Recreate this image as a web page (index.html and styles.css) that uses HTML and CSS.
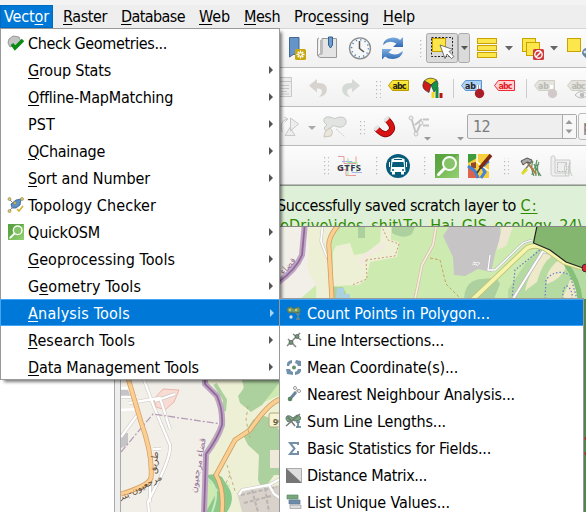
FILE: index.html
```html
<!DOCTYPE html>
<html lang="en">
<head>
<meta charset="utf-8">
<title>QGIS</title>
<link rel="stylesheet" href="styles.css">
</head>
<body>
<svg class="defs" width="0" height="0">
  <defs>
    <pattern id="grip" width="4" height="4" patternUnits="userSpaceOnUse"><rect width="1.3" height="1.3" fill="#bdbdbd"/></pattern>
    <linearGradient id="blue" x1="0" y1="0" x2="0" y2="1"><stop offset="0" stop-color="#7eafe0"/><stop offset="1" stop-color="#2f69b3"/></linearGradient>
    <linearGradient id="yel" x1="0" y1="0" x2="0" y2="1"><stop offset="0" stop-color="#fff04a"/><stop offset="1" stop-color="#e8c800"/></linearGradient>
    <linearGradient id="grn" x1="0" y1="0" x2="1" y2="1"><stop offset="0" stop-color="#5da943"/><stop offset="1" stop-color="#93cf70"/></linearGradient>
    <symbol id="osm" viewBox="0 0 24 24"><rect width="24" height="24" fill="url(#grn)"/><path d="M0 0H24L0 22Z" fill="#4d9838" opacity=".45"/><circle cx="14.5" cy="9.5" r="6.5" fill="#86c469" stroke="#fff" stroke-width="2"/><path d="M9.5 14.5L3.5 20.5" stroke="#fff" stroke-width="3" stroke-linecap="round"/></symbol>
  </defs>
</svg>
<div class="app">
  <nav class="menubar">
    <span class="top open"><span data-w="45">Vect<u>o</u>r</span></span>
    <span class="top"><span data-w="44"><u>R</u>aster</span></span>
    <span class="top"><span data-w="64"><u>D</u>atabase</span></span>
    <span class="top"><span data-w="31"><u>W</u>eb</span></span>
    <span class="top"><span data-w="36"><u>M</u>esh</span></span>
    <span class="top"><span data-w="75">Pro<u>c</u>essing</span></span>
    <span class="top"><span data-w="32"><u>H</u>elp</span></span>
  </nav>

  <div class="toolbar">
    <svg width="32" height="38" viewBox="280 29 32 38"><path d="M289.500 37.500H299V58L294 54L289.500 57Z" fill="#6594c8" stroke="#41678f"/><rect x="295" y="49" width="11" height="11" rx="1.500" fill="#c8a60c"/><path d="M300.500 50.500v8M296.500 54.500h8M297.700 51.700l5.600 5.600M303.300 51.700l-5.600 5.600" stroke="#fff" stroke-width="1.300"/><circle cx="300.500" cy="54.500" r="1.200" fill="#c8a60c"/></svg>
    <svg width="31" height="38" viewBox="312 29 31 38"><path d="M319 38Q317 38 317.500 41V55Q318 57.500 321 57.500H336.500V38.500H322V54Q319 53 318 56" fill="#e4e4e4" stroke="#999"/><path d="M321 40v14" stroke="#bbb" stroke-width="2"/><path d="M328.500 37V45L330.500 48L332.500 45V37Z" fill="#6c9bd0" stroke="#34608e"/></svg>
    <svg width="32" height="38" viewBox="343 29 32 38"><circle cx="360" cy="48.300" r="10.500" fill="#f7f7f7" stroke="#8c8c8c" stroke-width="1.300"/><circle cx="360" cy="48.300" r="8.500" fill="none" stroke="#4d85bd" stroke-width="1.600" stroke-dasharray="1.200 3.250"/><path d="M359.500 41V48.500L364 52" fill="none" stroke="#555" stroke-width="1.500"/></svg>
    <svg width="36" height="38" viewBox="375 29 36 38"><path d="M383 45Q384 38 393 37.500Q398 37.500 400 40L403 37V47H393L396.500 43.500Q389 39.500 383 45Z" fill="url(#blue)"/><path d="M403 51Q402 58 393 59Q388 59 385 56.500L382 59.500V49H392L388.500 52.500Q396 57 403 51Z" fill="url(#blue)"/></svg>
    <svg width="15" height="38" viewBox="411 29 15 38"><path d="M418 40h5v17h-5z" fill="url(#grip)"/></svg>
    <svg width="46" height="38" viewBox="426 29 46 38"><rect x="426.500" y="33.500" width="31" height="29" rx="2" fill="#dadada" stroke="#aaa"/><rect x="458.500" y="33.500" width="11" height="29" rx="2" fill="#dadada" stroke="#aaa"/><rect x="432.500" y="38.500" width="13" height="13" fill="#fbe64b" stroke="#c49c00"/><rect x="431.500" y="37.500" width="21" height="19" fill="none" stroke="#222" stroke-dasharray="2 1.500"/><path d="M440 45L453 49.500L449 51.500L454 56.500L451.500 58.500L447 54L445 58.500Z" fill="#fff" stroke="#555" stroke-width=".8"/><path d="M461 46h7l-3.500 4z" fill="#555"/></svg>
    <svg width="45" height="38" viewBox="472 29 45 38"><g fill="#fbe64b" stroke="#c9a400"><rect x="477.500" y="38.500" width="19" height="5"/><rect x="477.500" y="45.500" width="19" height="5"/><rect x="477.500" y="52.500" width="19" height="5"/></g><path d="M505 46h8l-4 4.500z" fill="#666"/></svg>
    <svg width="45" height="38" viewBox="517 29 45 38"><g fill="#fbe64b" stroke="#c9a400"><rect x="522.500" y="38.500" width="13" height="13"/><rect x="526.500" y="42.500" width="13" height="13"/></g><rect x="533" y="49" width="11" height="11" rx="1.500" fill="#d03939"/><circle cx="538.500" cy="54.500" r="3.700" fill="none" stroke="#fff" stroke-width="1.400"/><path d="M536 57l5-5" stroke="#fff" stroke-width="1.400"/><path d="M550 46h8l-4 4.500z" fill="#666"/></svg>
    <svg width="24" height="38" viewBox="562 29 24 38"><rect x="567.500" y="38.500" width="13" height="13" fill="#fbe64b" stroke="#c9a400"/><path d="M587 48a5 5 0 0 0-5 5q0 2 5 6z" fill="#66839e"/><path d="M583.500 52h3M585 50.500v3" stroke="#fff"/></svg>
  </div>

  <div class="toolbar">
    <svg width="22" height="39" viewBox="280 67 22 39"><g fill="#ededed" stroke="#c8c8c8"><path d="M274.500 76.500h17v4h-17zM278.500 80.500h13v15h-13z"/><path d="M281 84.500h8M281 87.500h8M281 90.500h6M281 93h8"/></g></svg>
    <svg width="33" height="39" viewBox="302 67 33 39"><path d="M309 84.500L317 78V82Q327 81 327 89Q326 95 319 96Q323 92 321.500 89Q320 87 317 87.500V91.500Z" fill="#d9d3d0"/></svg>
    <svg width="34" height="39" viewBox="335 67 34 39"><path d="M360 84.500L352 78V82Q342 81 342 89Q343 95 350 96Q346 92 347.500 89Q349 87 352 87.500V91.500Z" fill="#d6dad6"/></svg>
    <svg width="15" height="39" viewBox="369 67 15 39"><path d="M376 80h5v17h-5z" fill="url(#grip)"/></svg>
    <svg width="34" height="39" viewBox="384 67 34 39"><path d="M388.500 84.500L392.500 79.500H408.500V89.500H392.500Z" fill="url(#yel)" stroke="#b89c00"/><text class="tag" x="392.500" y="88" textLength="14">abc</text></svg>
    <svg width="42" height="39" viewBox="418 67 42 39"><path d="M431 84L424.500 79.500Q430 75 436.500 79Z" fill="#eed820" stroke="#222" stroke-width=".6"/><path d="M431 84L437 79.500Q440 85 434 91Z" fill="#119447" stroke="#222" stroke-width=".6"/><path d="M431 84L424 80Q420 88 429 91.500Z" fill="#cf1a1a" stroke="#222" stroke-width=".6"/><path d="M431.500 91h3v6h-3z" fill="#f6d51d"/><path d="M435.500 86h3v11h-3z" fill="#158c40"/><path d="M439.500 92h3v5h-3z" fill="#b51717"/><path d="M453.500 78v19" stroke="#ccc"/></svg>
    <svg width="31" height="39" viewBox="460 67 31 39"><path d="M461.500 84.500L465.500 79.500H481.500V89.500H465.500Z" fill="#acd2fa" stroke="#5c94d2"/><text class="tag" x="465" y="88" textLength="11">ab</text><path d="M478.500 84v6" stroke="#fff" stroke-width="3"/><path d="M478.500 84v6" stroke="#999" stroke-width="1"/><circle cx="479.500" cy="92.500" r="4.700" fill="#a91e28"/></svg>
    <svg width="41" height="39" viewBox="491 67 41 39"><path d="M494.500 84.500L498.500 79.500H514.500V89.500H498.500Z" fill="#ffd4d4" stroke="#f02930"/><text class="tag red" x="498.500" y="88" textLength="14">abc</text><path d="M526.500 78v19" stroke="#ccc"/></svg>
    <svg width="31" height="39" viewBox="532 67 31 39"><path d="M534.500 84.500L538.500 79.500H554.500V89.500H538.500Z" fill="#e5e4df" stroke="#cfcdc5"/><text class="tag dim" x="538" y="88" textLength="11">ab</text><path d="M551.500 84v6" stroke="#fff" stroke-width="3"/><circle cx="552.500" cy="92.500" r="4.700" fill="#d2caca"/></svg>
    <svg width="23" height="39" viewBox="563 67 23 39"><path d="M567.500 84.500L571.500 79.500H588V89.500H571.500Z" fill="#e5e4df" stroke="#cfcdc5"/><text class="tag dim" x="571.500" y="88" textLength="14">abc</text><path d="M575 94Q581 87 588 94Q581 100 575 94Z" fill="#f5f5f5" stroke="#bbb"/><circle cx="582" cy="94" r="2.300" fill="#bbb"/></svg>
  </div>

  <div class="toolbar">
    <svg width="40" height="39" viewBox="280 106 40 39"><g fill="#eee" stroke="#c8c8c8"><path d="M290.500 117v13l8-7zM285 134.500h10l-5-8z"/><path d="M282 131Q279 120 287 118M284 116l4 2l-3 3" fill="none"/></g><path d="M308 125h8l-4 4z" fill="#aaa"/></svg>
    <svg width="32" height="39" viewBox="320 106 32 39"><path d="M324 121Q323 115 330 116Q334 119 340 116Q347 116 346 122Q344 127 338 126Q332 123 331 127L326 130Q322 127 327 124Z" fill="#e1e4e1" stroke="#c4c8c4"/><path d="M324 136Q324 130 330 127Q334 130 331 135Z" fill="#ebe6dc" stroke="#ccc5b8"/><path d="M336 128l9 8" stroke="#ccc" stroke-dasharray="2 1"/></svg>
    <svg width="16" height="39" viewBox="352 106 16 39"><path d="M360 118h5v17h-5z" fill="url(#grip)"/></svg>
    <svg width="35" height="39" viewBox="368 106 35 39"><path d="M376.500 127.500Q385 137 390.500 130.500Q395 126 386.500 118" fill="none" stroke="#7d0505" stroke-width="6"/><path d="M376.500 127.500Q385 137 390.500 130.500Q395 126 386.500 118" fill="none" stroke="#d91212" stroke-width="4.600"/><path d="M374.500 129l4-4M384.500 120l4-4" stroke="#e5e5e5" stroke-width="3.500"/></svg>
    <svg width="64" height="39" viewBox="403 106 64 39"><g fill="none" stroke="#c5c5c5" stroke-width="2"><path d="M411 116l5 17l5-11M415 124l7-6"/><path d="M423 118.500h6M423 124.500h6"/></g><g fill="#eee" stroke="#c5c5c5"><circle cx="411" cy="117" r="2"/><circle cx="416" cy="133" r="2"/><circle cx="421" cy="122" r="2"/></g><path d="M424 136h7l-3.500 3.500zM457 136h7l-3.500 3.500z" fill="#999"/></svg>
    <div class="spin"><span data-w="17">12</span><div class="arrows"><svg width="12" height="23" viewBox="0 0 12 23"><path d="M2.500 9h7l-3.500-4zM2.500 14.500h7l-3.500 4z" fill="#999"/></svg></div></div>
    <div class="combo">p</div>
  </div>

  <div class="toolbar">
    <svg width="54" height="38" viewBox="280 145 54 38"><path d="M324 156h5v18h-5z" fill="url(#grip)"/></svg>
    <svg width="34" height="38" viewBox="334 145 34 38"><path d="M338 155.500h6v7h12v-7" fill="none" stroke="#ef9a9a"/><path d="M338 168.500h8v6h10" fill="none" stroke="#f39595"/><path d="M342 160.500h10v11h10" fill="none" stroke="#a6b0ee"/><path d="M348 157v18M348 161.500h9v11" fill="none" stroke="#9ae39a"/><text class="gtfs" x="337" y="169.500" textLength="24">GTFS</text></svg>
    <svg width="14" height="38" viewBox="368 145 14 38"><path d="M374 156h5v18h-5z" fill="url(#grip)"/></svg>
    <svg width="34" height="38" viewBox="382 145 34 38"><circle cx="398" cy="165" r="12" fill="#075d79"/><path d="M391.500 158Q398 155 404.500 158L405.500 171H390.500Z" fill="#fff"/><path d="M392.500 161h11l.7 5h-12.400z" fill="#075d79"/><path d="M394 158.500h8" stroke="#075d79"/><path d="M392 171h3v2.500h-3zM401 171h3v2.500h-3z" fill="#fff"/><path d="M389.500 161v5M406.500 161v5" stroke="#fff"/><circle cx="393" cy="169" r="1" fill="#075d79"/><circle cx="403" cy="169" r="1" fill="#075d79"/></svg>
    <svg width="15" height="38" viewBox="416 145 15 38"><path d="M423 156h5v18h-5z" fill="url(#grip)"/></svg>
    <svg width="33" height="38" viewBox="431 145 33 38"><use href="#osm" x="435" y="153" width="24" height="24"/></svg>
    <svg width="34" height="38" viewBox="464 145 34 38"><rect x="468" y="153" width="21" height="24" fill="#f9cf3d"/><path d="M468 153h9v4l-9 5z" fill="#3f9c3b"/><path d="M468 167h6l6 10h-12z" fill="#de634c"/><path d="M471 162l5-1v6l-5 1z" fill="#8e4a2b"/><path d="M468 165l7 5l3 7M489 160q-9 5-4 11l-4 6" fill="none" stroke="#4285d8" stroke-width="3"/><path d="M477 153v8l12 9" fill="none" stroke="#fff" stroke-width="1.500"/><path d="M491 154L480 167" stroke="#7b2c12" stroke-width="3.500"/><path d="M481 166l-4 6" stroke="#333" stroke-width="1.500"/></svg>
    <svg width="17" height="38" viewBox="498 145 17 38"><path d="M504 157h5v17h-5z" fill="url(#grip)"/></svg>
    <svg width="31" height="38" viewBox="515 145 31 38"><path d="M534 175q-4-9-1-15M536 175q-1-10 1-16M539 175q-3-9 0-14M541 175q-5-7-7-12M532 174q1-8 7-11" fill="none" stroke="#5a9060" stroke-width="1.200"/><path d="M527 161L536 173" stroke="#b57a35" stroke-width="2"/><path d="M521 160l6-3l5 2l-1 3l-4-1l-4 3z" fill="#aaa" stroke="#333" stroke-width=".8"/><path d="M532 160L523 171" stroke="#777" stroke-width="1.500"/><path d="M527 168L522 173" stroke="#dedb2b" stroke-width="3"/></svg>
    <svg width="40" height="38" viewBox="546 145 40 38"><path d="M551 156q3-3 4 0v16h15V159h-15M551 156v17q1 3 4 2h14" fill="#eee" stroke="#ccc"/><rect x="557.500" y="161.500" width="9" height="9" fill="none" stroke="#bbb" stroke-dasharray="2 1"/><path d="M566 175q-3-8 0-13M569 175q-2-8 1-14M572 175q-4-8-2-13" fill="none" stroke="#c5cac5"/></svg>
  </div>

  <main class="body">
    <aside class="panel"></aside>
    <div class="splitter"></div>
    <section class="view">
      <div class="message">
        <div><span data-w="239">Successfully saved scratch layer to</span> <a data-w="17">C:</a></div>
        <div class="second"><a data-w="303">eDrive\idos_shit\Tel_Hai_GIS_ecology_24\</a></div>
      </div>
      <svg class="map" width="465" height="285" viewBox="121 227 465 285">
        <rect x="121" y="227" width="465" height="285" fill="#cdebb0"/>
        <path d="M121 227H306L301 260L240 345L205 380L222 402L220 425L205 450L204 512H121Z" fill="#f2efe9"/>
        <path d="M306 227H325L330 299L317 299L316 285L285 299L280 280L301 258Z" fill="#eef0d5"/>
        <path d="M306 227Q311 245 307 265L310 275L316 285L300 299H280V281L301 258Z" fill="#f2efe9"/>
        <path d="M204 380H245L240 400L258 405L280 395V512H225L230 485L205 475L208 450L225 423Z" fill="#eef0d5"/>
        <!-- woods along the southern border -->
        <path d="M242 380H280V382L262 405L251 412L240 403L238 396L244 388Z" fill="#add19e"/>
        <path d="M253 420Q264 412 271 420L280 431V475H274L263 491L258 480L259 455L248 445L243 435Z" fill="#add19e"/>
        <path d="M215 384L225 400L224 411" fill="none" stroke="#add19e" stroke-width="4"/>
        <path d="M204 476Q216 472 222 477L230 490Q235 500 227 512H206L218 490Z" fill="#8ac989"/>
        <path d="M207 478Q222 488 212 512" fill="none" stroke="#c9e8c1" stroke-width="2"/>
        <path d="M154 399L163 389L179 390L174 402L165 410L156 407Z" fill="#f8dcd4" stroke="#edb5ac"/>
        <path d="M121 433h7v12l-7 3zM121 390h7l3 8h-10z" fill="#c7c4c8"/>
        <path d="M237 493l25-5l18-3v27h-38z" fill="#d9d2cb"/>
        <path d="M241 495l36-8M244 503l35-9M252 490l6 22M265 488l4 24" fill="none" stroke="#b9b3b1" stroke-width="2" stroke-dasharray="4 2"/>
        <!-- local streets -->
        <g fill="none" stroke="#ccc8c4" stroke-width="3.500" stroke-linejoin="round"><path d="M144 380L154 407L170 445Q171 455 160 478L148 502L149 512M121 397H137M129 403L160 398L170 429M155 401L175 394M121 437L138 414M153 449h8M150 482v20"/><path d="M239 495L242 490L269 485L274 494L280 498M269 485L280 479"/></g>
        <g fill="none" stroke="#fff" stroke-width="2.300" stroke-linejoin="round"><path d="M144 380L154 407L170 445Q171 455 160 478L148 502L149 512M121 397H137M129 403L160 398L170 429M155 401L175 394M121 410L138 409M121 437L138 414M153 449h8M150 482v20M121 388H133"/><path d="M239 495L242 490L269 485L274 494L280 498M269 485L280 479"/></g>
        <path d="M121 452L153 414L221 424" fill="none" stroke="#b59db5" stroke-width="1.300" stroke-dasharray="7 2 2 2"/>
        <path d="M128 378L141 422Q153 455 151 478Q148 486 121 494" fill="none" stroke="#d6a066" stroke-width="5"/>
        <path d="M128 378L141 422Q153 455 151 478Q148 486 121 494" fill="none" stroke="#fbcf91" stroke-width="3.500"/>
        <path d="M281 399Q269 402 250 430L235 440L216 475Q224 488 222 512" fill="none" stroke="#c99b5e" stroke-width="5"/>
        <path d="M281 399Q269 402 250 430L235 440L216 475Q224 488 222 512" fill="none" stroke="#fbcf91" stroke-width="3.500"/>
        <path d="M305 222L302 255Q296 270 276 284L240 325L205 370V384L217 396Q223 410 222 425Q218 438 206 454L204 515" fill="none" stroke="#bfa5c5" stroke-width="6"/>
        <path d="M305 222L302 255Q296 270 276 284L240 325L205 370V384L217 396Q223 410 222 425Q218 438 206 454L204 515" fill="none" stroke="#8e6694" stroke-width="1.700"/>
        <path d="M248 406l-2 14l4 18M227 465l8 26M230 475l-6 12" fill="none" stroke="#bfae76" stroke-dasharray="3 3"/>
        <rect x="269" y="413" width="22" height="14" rx="2" fill="#f5f2d5" stroke="#b1aa78"/><text class="road" x="273" y="425">99</text>
        <rect x="270" y="450" width="12" height="18" fill="#efe9dc"/>
        <g><text transform="translate(140 491) rotate(-28)" text-anchor="middle" class="ar dark">مرجعيون-بنت</text><text transform="translate(157 463) rotate(-83)" text-anchor="middle" class="ar dark">طريق</text><text transform="translate(201 466) rotate(-80)" text-anchor="middle" class="ar violet">قضاء مرجعيون</text><text transform="translate(290 268) rotate(-48)" text-anchor="middle" class="ar violet">قضاء</text></g>
        <!-- northern fields -->
        <path d="M310 227H337L329 243L331 299H316L317 285L308 268Z" fill="#eef0d5"/>
        <path d="M333 252L336 246L350 243L354 255L366 253L380 242L381 227H391V240L399 242L397 257L370 262L366 280L358 285L333 286Z" fill="#eef0d5"/>
        <path d="M357 262L365 253L381 244L387 245L368 257L361 266" fill="#f2e9df"/>
        <path d="M366 260L395 256L399 244L388 240L382 227M366 260L367 279L352 285" fill="none" stroke="#cc9b77" stroke-dasharray="2 2"/>
        <path d="M358 227h7v11h-7zM392 227h23l-3 7q-8 6-20-1zM333 287h10l6 12h-16z" fill="#add19e"/>
        <path d="M337 288h7v6h6v5h-14z" fill="#aad3df"/>
        <path d="M449 227H500L501 236L496 250L491 272L478 269L465 276L454 275L453 257L443 236Z" fill="#c7c4c6"/>
        <path d="M502 227h11l-7 19l-9 4z" fill="#eee8d3"/>
        <path d="M472 264l5 1l-4-3l7 1l-3 3" fill="none" stroke="#eee"/>
        <path d="M464 299Q465 279 483 279Q498 276 500 284L494 299Z" fill="#add19e"/>
        <path d="M430 258l10 2l6 24l15 15M417 287l-3 12" fill="none" stroke="#c9a35f" stroke-dasharray="3 2"/>
        <path d="M436 227L433 245L422 265L415 299" fill="none" stroke="#d8bca4" stroke-width="3"/><path d="M436 227L433 245L422 265L415 299" fill="none" stroke="#f5eee1" stroke-width="1.600"/>
        <path d="M490 255L488 270L495 270L523 243L532 240" fill="none" stroke="#bbb" stroke-width="2.500"/><path d="M490 255L488 270L495 270L523 243L532 240" fill="none" stroke="#fff" stroke-width="1.300"/>
        <path d="M508 299V290L525 264L540 247L555 252L586 273V299Z" fill="#b6dba2"/>
        <path d="M541 254q8-5 10 3q-9 6-14 25l-12 9q3-16 16-37zM556 262q7-3 11 3q-5 14-20 19q-3-10 9-22zM570 280q8 0 8 19h-16z" fill="#eee9c9"/>
        <path d="M512 299L515 270L540 250M545 299L546 280Q555 268 570 275L577 299M563 299q-1-12 4-13q6 4 5 13" fill="none" stroke="#6678c7" stroke-width="1.200" stroke-dasharray="1.500 2"/>
        <path d="M513 299L531 270L543 251L553 254" fill="none" stroke="#bbb" stroke-width="3.500"/><path d="M513 299L531 270L543 251L553 254" fill="none" stroke="#fff" stroke-width="2"/>
        <path d="M323 222L321 241L325 252L331 265" fill="none" stroke="#c9c5be" stroke-width="3"/><path d="M323 222L321 241L325 252L331 265" fill="none" stroke="#fff" stroke-width="1.800"/>
        <path d="M341 222Q327 237 329 248L332 300" fill="none" stroke="#d19b5b" stroke-width="5"/><path d="M341 222Q327 237 329 248L332 300" fill="none" stroke="#fbcf91" stroke-width="3.500"/>
        <path d="M566 264Q578 280 580 299" fill="none" stroke="#86c078" stroke-width="5"/>
        <path d="M470 302L527 248Q536 243 547 250L564 262L586 269" fill="none" stroke="#bfc17c" stroke-width="5.500"/><path d="M470 302L527 248Q536 243 547 250L564 262L586 269" fill="none" stroke="#f4f4ab" stroke-width="3.800"/>
        <path d="M537 226L533.500 243L550 250L566 262L583 268L590 268V226Z" fill="#85b670" stroke="#222" stroke-width="1.200"/>
        <path d="M583 299h4v215h-4z" fill="#508552"/>
        <circle cx="586" cy="268" r="4" fill="#d8282f" stroke="#333"/>
        <path d="M584 438l3-2v6zM584 453l3-2v6z" fill="#b52835"/>
      </svg>
    </section>
  </main>
</div>

<div class="menu primary">
  <div class="item"><svg width="18" height="18" viewBox="0 0 18 18"><path d="M2 5L6 2L12 3L14 8L11 13L6 12L3 13L1 9Z" fill="#c4c4c4" stroke="#999"/><path d="M5 10L8 14L16 6" fill="none" stroke="#0a8c13" stroke-width="3.500"/></svg><span data-w="139">Check Geometries...</span></div>
  <div class="item sub"><span data-w="83"><u>G</u>roup Stats</span></div>
  <div class="item sub"><span data-w="145"><u>O</u>ffline-MapMatching</span></div>
  <div class="item sub"><span data-w="27">PST</span></div>
  <div class="item sub"><span data-w="77"><u>Q</u>Chainage</span></div>
  <div class="item sub"><span data-w="122"><u>S</u>ort and Number</span></div>
  <div class="item"><svg width="18" height="18" viewBox="0 0 18 18"><path d="M4 8L9 4L14 3L13 9L9 12L5 12Z" fill="#5b8fc5" stroke="#315e94" stroke-width=".8"/><path d="M2 3L6 7M14 4l2-2M2 15l4-4" stroke="#888"/><g fill="#dbc96a" stroke="#8b813f" stroke-width=".6"><circle cx="2.500" cy="3" r="1.500"/><circle cx="15" cy="3" r="1.500"/><circle cx="2.500" cy="15" r="1.500"/><circle cx="8" cy="7" r="1.300"/></g><path d="M10 13l2 2l4-5" fill="none" stroke="#d6b13c" stroke-width="1.700"/></svg><span data-w="128">Topology Checker</span></div>
  <div class="item sub"><svg width="18" height="18" viewBox="0 0 18 18"><use href="#osm" x="1" y="1" width="16" height="16"/></svg><span data-w="72">QuickOSM</span></div>
  <div class="item sub"><span data-w="147"><u>G</u>eoprocessing Tools</span></div>
  <div class="item sub"><span data-w="113">G<u>e</u>ometry Tools</span></div>
  <div class="item sub active"><span data-w="102"><u>A</u>nalysis Tools</span></div>
  <div class="item sub"><span data-w="107"><u>R</u>esearch Tools</span></div>
  <div class="item sub"><span data-w="171"><u>D</u>ata Management Tools</span></div>
</div>

<div class="menu secondary">
  <div class="item active"><svg width="18" height="18" viewBox="0 0 18 18"><path d="M2 6Q2 3 6 3L9 5L13 3Q16 4 15 8L10 9L7 8L4 9Z" fill="#719c6e" stroke="#5b7754"/><circle cx="5" cy="6" r="1.200" fill="#cfca6a"/><circle cx="11" cy="6" r="1.200" fill="#cfca6a"/><circle cx="6" cy="13" r="1.700" fill="#ddd"/><path d="M11 10h4M13 10v5M11 15h4" stroke="#688" stroke-width="1.500"/></svg><span data-w="183">Count Points in Polygon...</span></div>
  <div class="item"><svg width="18" height="18" viewBox="0 0 18 18"><path d="M3 8l8 8M2 15L15 2M8 3l8 6" stroke="#858585" stroke-width="1.500"/><g fill="#6a9a70" stroke="#555" stroke-width=".7"><circle cx="6" cy="11.500" r="2"/><circle cx="12" cy="5.500" r="2"/></g></svg><span data-w="137">Line Intersections...</span></div>
  <div class="item"><svg width="18" height="18" viewBox="0 0 18 18"><g fill="#7190ac"><path d="M2 8Q1 3 7 2v3l-2 1l-1 2zM11 2l5 1v5h-3l-1-2l-2-1zM1 11h4l1 2l2 1v3l-6-1zM13 11h3q1 5-6 6v-3l2-1z"/></g><circle cx="9" cy="9.500" r="2" fill="#62936e"/></svg><span data-w="151">Mean Coordinate(s)...</span></div>
  <div class="item"><svg width="18" height="18" viewBox="0 0 18 18"><path d="M5 14L13 4" stroke="#aaa"/><path d="M5 14L11 7" stroke="#68869d" stroke-width="3"/><circle cx="5" cy="14" r="2.300" fill="#5b8567"/><circle cx="10" cy="3" r="1.500" fill="#fff" stroke="#999"/><circle cx="14" cy="6" r="1.500" fill="#fff" stroke="#999"/></svg><span data-w="208">Nearest Neighbour Analysis...</span></div>
  <div class="item"><svg width="18" height="18" viewBox="0 0 18 18"><path d="M1 7Q1 3 5 4L8 6L12 3Q17 4 15 8L10 9L7 8L3 10Z" fill="#76a982" stroke="#59795c"/><path d="M1 14L15 2M2 4l8 10" stroke="#777" stroke-width="1.500"/><path d="M11 10h4M13 10v5M11 15h5" stroke="#567990" stroke-width="1.500"/></svg><span data-w="139">Sum Line Lengths...</span></div>
  <div class="item"><svg width="18" height="18" viewBox="0 0 18 18"><path d="M13 6V4H5L9.500 9.500L5 15H13V12" fill="none" stroke="#7490a9" stroke-width="2"/></svg><span data-w="184">Basic Statistics for Fields...</span></div>
  <div class="item"><svg width="18" height="18" viewBox="0 0 18 18"><path d="M1.500 2.500h15v14h-15z" fill="#dedede" stroke="#aaa"/><path d="M1 2L17 17H1Z" fill="#767676"/></svg><span data-w="120">Distance Matrix...</span></div>
  <div class="item"><svg width="18" height="18" viewBox="0 0 18 18"><path d="M2 2h11v4H2z" fill="#76a67c" stroke="#5c8b67" stroke-width=".7"/><path d="M4 7h11v4H4z" fill="#6e8dab" stroke="#607790" stroke-width=".7"/><path d="M5 12h11v3.500H5z" fill="#ddd" stroke="#999" stroke-width=".7"/></svg><span data-w="143">List Unique Values...</span></div>
</div>
<script src="fit.js"></script>
</body>
</html>
```
FILE: styles.css
```css
* { box-sizing: border-box; }
html { height: 512px; overflow: hidden; }
body {
  margin: 0;
  width: 586px;
  height: 512px;
  overflow: hidden;
  position: relative;
  background: #fff;
  color: #000;
  font: 16px/20px "DejaVu Sans Condensed", "Noto Sans", sans-serif;
}
.defs { position: absolute; }
svg { display: block; flex: none; }
[data-w] { display: inline-block; white-space: pre; }
u { text-decoration-thickness: 1px; text-underline-offset: 2px; }
.app { display: flex; flex-direction: column; height: 512px; }
.menubar {
  flex: none;
  display: flex;
  height: 29px;
  padding-top: 5px;
  background: linear-gradient(#f3f3f3 5px, #eee 5px);
  border-bottom: 1px solid #d5d5d5;
}
.top { height: 23px; padding: 2px 7px 0; white-space: nowrap; }
.top.open { width: 53px; margin-right: 3px; padding-left: 4px; background: #0078d7; color: #fff; box-shadow: inset 0 0 0 1px #006abf; }
.toolbar {
  flex: none;
  display: flex;
  align-items: flex-start;
  height: 39px;
  padding-left: 280px;
  overflow: hidden;
  background: linear-gradient(#fcfcfc, #f1f1f1);
  border-bottom: 1px solid #bbb;
}
.tag { font: bold 8px "DejaVu Sans", sans-serif; fill: #28251b; }
.tag.red { fill: #e31d28; }
.tag.dim { fill: #bab8b2; }
.gtfs { font: bold 9.500px "Noto Sans", sans-serif; fill: #363b4a; }
.spin {
  flex: none;
  display: flex;
  align-items: center;
  justify-content: space-between;
  width: 110px;
  height: 25px;
  margin-top: 7px;
  padding-left: 5px;
  background: #efefef;
  border: 1px solid #aaa;
  border-radius: 2px;
  color: #7b7b7b;
}
.arrows { width: 14px; height: 23px; border-left: 1px solid #aaa; background: #f7f7f7; }
.combo {
  flex: none;
  width: 20px;
  height: 27px;
  margin: 6px 0 0 1px;
  padding: 3px 4px;
  border: 1px solid #bbb;
  border-radius: 3px;
  color: #777;
}
.body { flex: 1; display: flex; min-height: 0; }
.panel { width: 114px; background: #fff; }
.splitter { width: 7px; background: #eee; border: solid #aaa; border-width: 0 1px; }
.view { width: 465px; }
.message {
  height: 42px;
  padding: 10px 0 0 156px;
  overflow: hidden;
  background: #dff0d8;
  border-top: 1px solid #8b9a87;
  border-bottom: 1px solid #888;
  white-space: nowrap;
}
.message a { color: #2f8b00; text-decoration: underline; text-decoration-thickness: 1px; text-underline-offset: 2px; }
.second { padding-left: 3px; }
.ar { font: 9px "DejaVu Sans", sans-serif; }
.dark { fill: #5d4933; }
.violet { fill: #967397; }
.road { font: bold 9px "Noto Sans", sans-serif; fill: #63603c; }
.menu { position: absolute; background: #fff; border: 1px solid #999; }
.primary { left: 0; top: 28px; width: 280px; height: 352px; box-shadow: 3px 3px 3px -1px rgba(0, 0, 0, .5); }
.secondary { left: 279px; top: 298px; width: 305px; height: 214px; border-bottom: 0; overflow: hidden; }
.item { display: flex; align-items: center; height: 27px; padding-left: 27px; }
.item svg { width: 18px; margin: 0 3px 0 -21px; }
.secondary .item svg { margin-left: -22px; margin-right: 4px; }
.item [data-w] { position: relative; top: 1px; }
.sub::after {
  content: "";
  margin-left: auto;
  margin-right: 6px;
  border: 4px solid transparent;
  border-left-color: #555;
  border-right-width: 0;
}
.active { background: #0078d7; color: #fff; box-shadow: inset 0 1px #42a5f5, inset 0 -1px #42a5f5; }
.active::after { border-left-color: #a9d6fa; }
.primary .active { box-shadow: inset 0 0 0 1px #42a5f5; margin: 0 -1px; padding-left: 28px; }
```
FILE: fit.js
```js
// Spread each label to the width reserved for it.
document.querySelectorAll("[data-w]").forEach(function (el) {
  var target = Number(el.dataset.w);
  var natural = el.getBoundingClientRect().width;
  el.style.letterSpacing = (target - natural) / el.textContent.length + "px";
});
```
